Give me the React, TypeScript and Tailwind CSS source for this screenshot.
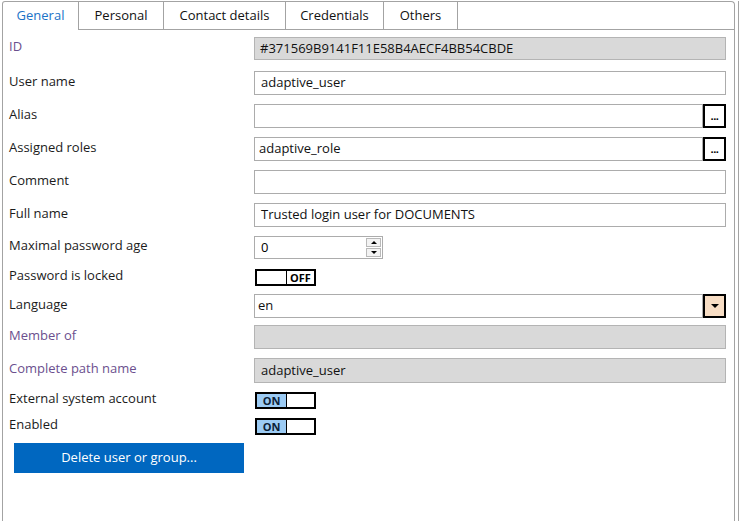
import React from "react";

const tabs = ["General", "Personal", "Contact details", "Credentials", "Others"];

function Label({ text, muted }: { text: string; muted?: boolean }) {
  return (
    <div className={`w-[251px] shrink-0 pl-[6px] pb-[3px] ${muted ? "text-[#6b4f8e]" : "text-[#1b1b1b]"}`}>
      {text}
    </div>
  );
}

function TextBox({ value, readOnly, pad = "pl-[6px]", h = "h-[24px]" }: { value?: string; readOnly?: boolean; pad?: string; h?: string }) {
  return (
    <div
      className={`flex-1 ${h} flex items-center border ${
        readOnly ? "bg-[#d9d9d9] border-[#b4b4b4]" : "bg-white border-[#acacac]"
      } ${pad} text-[#111]`}
    >
      {value}
    </div>
  );
}

function EllipsisButton() {
  return (
    <div className="w-[23px] h-full border-2 border-black bg-white flex items-end justify-center pb-[5px]">
      <span className="text-[11px] font-bold leading-none tracking-[-0.5px]">...</span>
    </div>
  );
}

function Toggle({ on }: { on: boolean }) {
  return (
    <div className="ml-[1px] w-[61px] h-[17px] border-2 border-black flex text-[11px] font-bold leading-none">
      <div className={`w-[29px] h-full flex items-center justify-center ${on ? "bg-[#9ccbf4] text-[#0b2036]" : "bg-white"}`}>
        {on ? "ON" : ""}
      </div>
      <div className="w-[1px] bg-black" />
      <div className="flex-1 h-full flex items-center justify-center bg-white text-black">{on ? "" : "OFF"}</div>
    </div>
  );
}

export default function App() {
  return (
    <div
      className="w-[742px] h-[521px] bg-white flex text-[13px] overflow-hidden"
      style={{ fontFamily: '"Open Sans", "Noto Sans", "Liberation Sans", sans-serif' }}
    >
      <div className="ml-[2px] mt-[1px] w-[733px] flex flex-col border-l border-r border-t border-[#a3a3a3] rounded-tl-[3px] rounded-tr-[4px]">
        {/* Tabs */}
        <div className="h-[28px] flex shrink-0">
          {tabs.map((t, i) => (
            <div
              key={t}
              className={`h-full flex items-center justify-center border-r border-[#a3a3a3] font-medium ${
                i === 0 ? "w-[76px] text-[#1a73c7]" : "border-b text-[#111]"
              } ${i === 1 ? "w-[85px]" : ""} ${i === 2 ? "w-[122px]" : ""} ${i === 3 ? "w-[98px]" : ""} ${
                i === 4 ? "w-[74px]" : ""
              }`}
            >
              {t}
            </div>
          ))}
          <div className="flex-1 border-b border-[#a3a3a3]" />
        </div>

        {/* Form */}
        <div className="flex flex-col pr-[8px]">
          <div className="mt-[7px] h-[23px] flex items-center">
            <Label text="ID" muted />
            <TextBox value="#371569B9141F11E58B4AECF4BB54CBDE" readOnly pad="pl-[5px]" h="h-[23px]" />
          </div>
          <div className="mt-[11px] h-[24px] flex items-center">
            <Label text="User name" />
            <TextBox value="adaptive_user" />
          </div>
          <div className="mt-[9px] h-[24px] flex items-center">
            <Label text="Alias" />
            <TextBox />
            <EllipsisButton />
          </div>
          <div className="mt-[9px] h-[24px] flex items-center">
            <Label text="Assigned roles" />
            <TextBox value="adaptive_role" pad="pl-[4px]" />
            <EllipsisButton />
          </div>
          <div className="mt-[9px] h-[24px] flex items-center">
            <Label text="Comment" />
            <TextBox />
          </div>
          <div className="mt-[9px] h-[24px] flex items-center">
            <Label text="Full name" />
            <TextBox value="Trusted login user for DOCUMENTS" />
          </div>
          <div className="mt-[9px] h-[23px] flex items-center">
            <Label text="Maximal password age" />
            <div className="w-[129px] h-[23px] border border-[#acacac] bg-white flex items-center pl-[6px]">
              <span className="flex-1">0</span>
              <div className="w-[15px] h-full flex flex-col justify-center gap-[1px] mr-[1px]">
                <div className="h-[9px] border border-[#b9b9b9] bg-[#f3f3f3] flex items-center justify-center">
                  <div className="w-0 h-0 border-l-[3px] border-r-[3px] border-b-[3px] border-l-transparent border-r-transparent border-b-black" />
                </div>
                <div className="h-[9px] border border-[#b9b9b9] bg-[#f3f3f3] flex items-center justify-center">
                  <div className="w-0 h-0 border-l-[3px] border-r-[3px] border-t-[3px] border-l-transparent border-r-transparent border-t-black" />
                </div>
              </div>
            </div>
          </div>
          <div className="mt-[10px] h-[17px] flex items-center">
            <Label text="Password is locked" />
            <Toggle on={false} />
          </div>
          <div className="mt-[8px] h-[24px] flex items-center">
            <Label text="Language" />
            <TextBox value="en" pad="pl-[3px]" />
            <div className="w-[23px] h-full border-2 border-black bg-[#f7ddc4] flex items-center justify-center">
              <div className="w-0 h-0 border-l-[4px] border-r-[4px] border-t-[4px] border-l-transparent border-r-transparent border-t-black" />
            </div>
          </div>
          <div className="mt-[7px] h-[24px] flex items-center">
            <Label text="Member of" muted />
            <TextBox readOnly />
          </div>
          <div className="mt-[9px] h-[25px] flex items-center">
            <Label text="Complete path name" muted />
            <TextBox value="adaptive_user" readOnly h="h-[25px]" />
          </div>
          <div className="mt-[9px] h-[17px] flex items-center">
            <Label text="External system account" />
            <Toggle on />
          </div>
          <div className="mt-[9px] h-[17px] flex items-center">
            <Label text="Enabled" />
            <Toggle on />
          </div>
          <div className="mt-[8px] ml-[11px]">
            <button className="w-[230px] h-[30px] bg-[#0067c0] text-white text-[13px] flex items-center justify-center">
              Delete user or group...
            </button>
          </div>
        </div>
      </div>
      <div className="ml-[3px] mt-[1px] w-[1px] h-full bg-[#a3a3a3]" />
    </div>
  );
}
